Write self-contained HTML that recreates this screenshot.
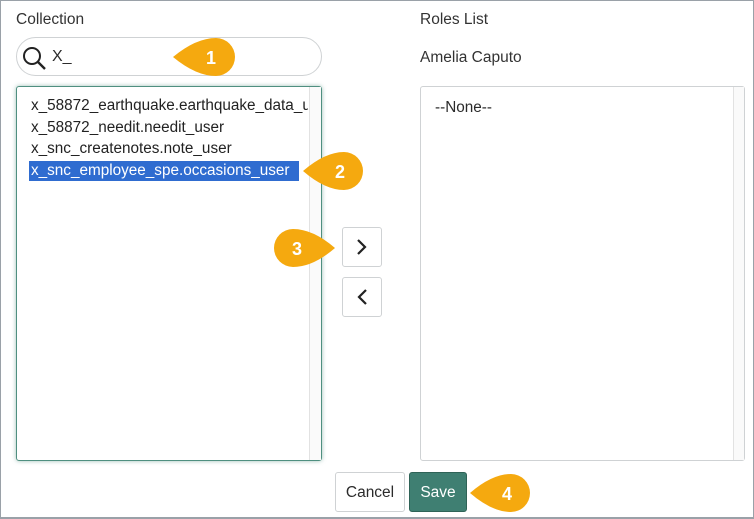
<!DOCTYPE html>
<html><head><style>
*{box-sizing:border-box;margin:0;padding:0}
body{width:754px;height:519px;background:#fff;font-family:"Liberation Sans",sans-serif;color:#2b2b2b;position:relative;overflow:hidden}
.frame{position:absolute;left:0;top:0;width:754px;height:519px;border:1px solid #9aa1a8;border-bottom:2px solid #9aa1a8}
.a{position:absolute}
.lbl{font-size:15.5px;color:#333}
.box{border:1px solid #cfd2d4;border-radius:3px}
.it{position:absolute;left:31px;font-size:15.3px;white-space:nowrap;color:#222}
.btn{position:absolute;border:1px solid #cfd2d4;border-radius:3px;background:#fff}
</style></head><body>
<div class="frame"></div>
<div class="a lbl" style="left:16px;top:11px">Collection</div>
<div class="a lbl" style="left:420px;top:11px">Roles List</div>
<div class="a lbl" style="left:420px;top:49px">Amelia Caputo</div>
<div class="a" style="left:16px;top:37px;width:306px;height:39px;border:1px solid #cfd2d4;border-radius:20px"></div>
<svg class="a" style="left:21px;top:45px" width="28" height="28" viewBox="0 0 28 28"><circle cx="11" cy="11" r="8" fill="none" stroke="#222" stroke-width="2"/><line x1="17" y1="17" x2="24" y2="24" stroke="#222" stroke-width="2.4"/></svg>
<div class="a" style="left:52px;top:48px;font-size:16px">X_</div>
<div class="a" style="left:16px;top:86px;width:306px;height:375px;border:1px solid #4f8f80;border-radius:3px;box-shadow:0 0 4px rgba(60,130,110,.5)"></div>
<div class="a" style="left:309px;top:87px;width:12px;height:373px;border-left:1px solid #e2e2e2;background:#fafafa"></div>
<div class="a" style="left:29px;top:161px;width:270px;height:20px;background:#2f6cd0"></div>
<div class="it" style="top:97px;width:277px;overflow:hidden">x_58872_earthquake.earthquake_data_user</div>
<div class="it" style="top:119px">x_58872_needit.needit_user</div>
<div class="it" style="top:140px">x_snc_createnotes.note_user</div>
<div class="it" style="top:162px;color:#fff">x_snc_employee_spe.occasions_user</div>
<div class="a box" style="left:420px;top:86px;width:325px;height:375px"></div>
<div class="a" style="left:733px;top:87px;width:11px;height:373px;border-left:1px solid #e2e2e2;background:#fafafa"></div>
<div class="a" style="left:435px;top:99px;font-size:15.3px">--None--</div>
<div class="btn" style="left:342px;top:227px;width:40px;height:40px"><svg width="38" height="38"><path d="M15 12l7 7-7 7" fill="none" stroke="#222" stroke-width="2.2"/></svg></div>
<div class="btn" style="left:342px;top:277px;width:40px;height:40px"><svg width="38" height="38"><path d="M23 12l-7 7 7 7" fill="none" stroke="#222" stroke-width="2.2"/></svg></div>
<div class="btn" style="left:335px;top:472px;width:70px;height:40px;font-size:15.5px;text-align:center;line-height:40px">Cancel</div>
<div class="a" style="left:409px;top:472px;width:58px;height:40px;background:#3f7f72;border:1px solid #2f6357;border-radius:3px;color:#fff;font-size:15.5px;text-align:center;line-height:40px">Save</div>
<svg class="a" style="left:0;top:0" width="754" height="519">
<g fill="#f5a90f">
<path d="M173 57Q196 38 216 38A19 19 0 1 1 216 76Q196 76 173 57Z"/>
<path d="M303 171Q325 152 344 152A19 19 0 1 1 344 190Q325 190 303 171Z"/>
<path d="M335 248Q313 229 293 229A19 19 0 1 0 293 267Q313 267 335 248Z"/>
<path d="M470 493Q492 474 511 474A19 19 0 1 1 511 512Q492 512 470 493Z"/>
</g>
<g fill="#fff" font-family="Liberation Sans" font-weight="bold" font-size="18" text-anchor="middle">
<text x="211" y="64">1</text><text x="340" y="178">2</text><text x="297" y="255">3</text><text x="507" y="500">4</text>
</g>
</svg>
</body></html>
